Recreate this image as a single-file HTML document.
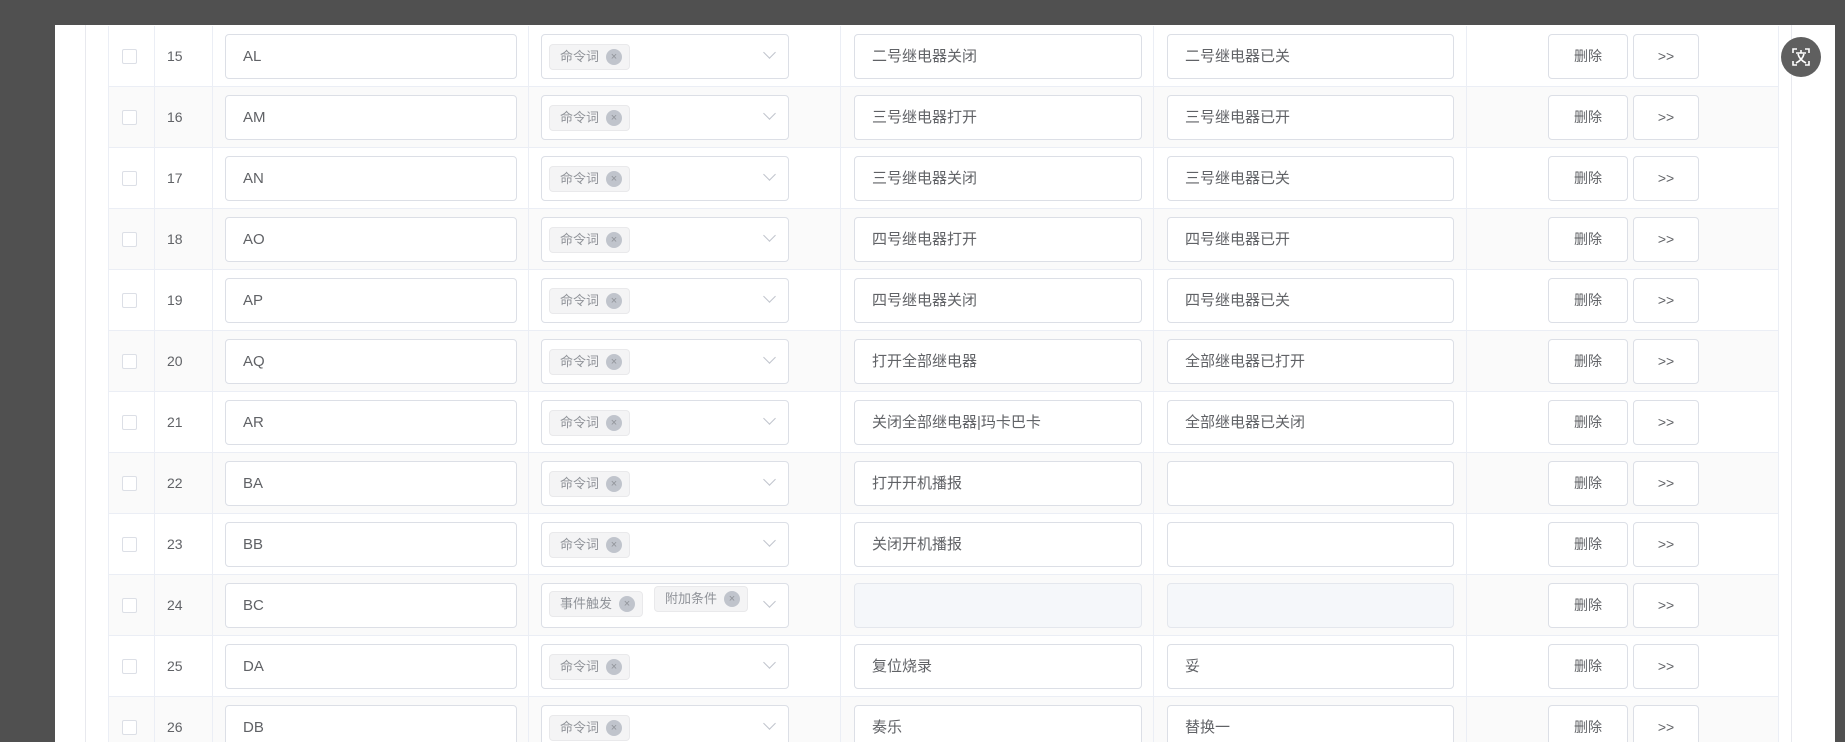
<!DOCTYPE html>
<html><head><meta charset="utf-8"><style>
*{box-sizing:border-box;margin:0;padding:0}
html,body{width:1845px;height:742px;overflow:hidden}
body{background:#505050;position:relative;font-family:"Liberation Sans","Noto Sans CJK SC",sans-serif;}
.panel{position:absolute;left:55px;top:25px;width:1780px;height:717px;background:#fff;}
.vl{position:absolute;top:25px;height:717px;width:1px;background:#e8e9ee}
#t{position:absolute;left:0;top:25px;width:1845px;height:717px;overflow:hidden}
.row{position:absolute;left:108px;width:1671px;height:61px;border-bottom:1px solid #ebeef5;border-left:1px solid #ebeef5;border-right:1px solid #ebeef5}
.row.alt{background:#fafafa}
.c{position:absolute;top:0;height:61px;border-right:1px solid #ebeef5}
.cb{position:absolute;left:13px;top:23px;width:15px;height:15px;border:1px solid #dcdfe6;border-radius:2px;background:#fff}
.idx{position:absolute;left:58px;top:0;line-height:61px;font-size:14px;color:#606266}
.inp{position:absolute;top:8px;height:45px;border:1px solid #dcdfe6;border-radius:4px;background:#fff;font-size:15px;color:#606266;line-height:43px;padding-left:17px}
.inp.dis{background:#f5f7fa;border-color:#e4e7ed}
.tag{position:absolute;height:26px;background:#f4f4f5;border:1px solid #e9e9eb;border-radius:4px;font-size:13px;color:#909399;line-height:24px;padding-left:10px;padding-right:30px}
.tag i{position:absolute;right:7px;top:4px;width:16px;height:16px;border-radius:50%;background:#c0c4cc;color:#909399;font-style:normal;font-size:11px;line-height:16px;text-align:center}
.arr{position:absolute;right:14px;top:13px;width:9px;height:9px;border-right:1px solid #c0c4cc;border-bottom:1px solid #c0c4cc;transform:rotate(45deg)}
.btn{position:absolute;top:8px;height:45px;border:1px solid #dcdfe6;border-radius:4px;background:#fff;font-size:14px;color:#606266;line-height:43px;text-align:center}
.icon{position:absolute;left:1781px;top:37px;width:40px;height:40px;border-radius:50%;background:#5f5f5f}
</style></head><body>
<div class="panel"></div>
<div class="vl" style="left:85px"></div>
<div class="vl" style="left:1791px"></div>
<div id="t"></div>
<div class="icon"><svg width="40" height="40" viewBox="0 0 40 40" fill="none" stroke="#fff" stroke-width="1.6"><path d="M12 16v-4h4M24 12h4v4M28 24v4h-4M16 28h-4v-4"/><path d="M15 16h10M20 13v3M17 17c1 4 4 7 8 9M23 17c-1 4-4 7-8 9"/></svg></div>
<script>
const d=[["15","AL","二号继电器关闭","二号继电器已关"],["16","AM","三号继电器打开","三号继电器已开"],["17","AN","三号继电器关闭","三号继电器已关"],["18","AO","四号继电器打开","四号继电器已开"],["19","AP","四号继电器关闭","四号继电器已关"],["20","AQ","打开全部继电器","全部继电器已打开"],["21","AR","关闭全部继电器|玛卡巴卡","全部继电器已关闭"],["22","BA","打开开机播报",""],["23","BB","关闭开机播报",""],["24","BC",null,null],["25","DA","复位烧录","妥"],["26","DB","奏乐","替换一"]];
let h="";
d.forEach((r,i)=>{
const top=1+61*i;
let tags = r[2]===null ? '<div class="tag" style="left:7px;top:7px">事件触发<i>×</i></div><div class="tag" style="left:112px;top:2px">附加条件<i>×</i></div>' : '<div class="tag" style="left:7px;top:9px">命令词<i>×</i></div>';
h+=`<div class="row${i%2?' alt':''}" style="top:${top}px">
<div class="c" style="left:0;width:46px"><div class="cb"></div></div>
<div class="c" style="left:46px;width:58px"><div class="idx" style="left:12px">${r[0]}</div></div>
<div class="c" style="left:104px;width:316px"></div>
<div class="c" style="left:420px;width:312px"></div>
<div class="c" style="left:732px;width:313px"></div>
<div class="c" style="left:1045px;width:313px"></div>
<div class="inp" style="left:116px;width:292px">${r[1]}</div>
<div class="inp" style="left:432px;width:248px">${tags}<div class="arr"></div></div>
<div class="inp${r[2]===null?' dis':''}" style="left:745px;width:288px">${r[2]||''}</div>
<div class="inp${r[3]===null?' dis':''}" style="left:1058px;width:287px">${r[3]||''}</div>
<div class="btn" style="left:1439px;width:80px">删除</div>
<div class="btn" style="left:1524px;width:66px">&gt;&gt;</div>
</div>`;});
document.getElementById("t").innerHTML=h;
</script>
</body></html>
